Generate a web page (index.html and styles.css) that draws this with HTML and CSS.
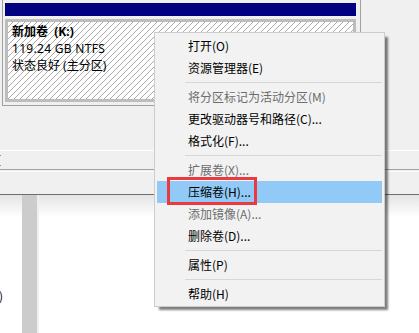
FILE: index.html
```html
<!DOCTYPE html>
<html lang="zh-CN">

<head>
    <meta charset="UTF-8">
    <meta name="viewport" content="width=device-width, initial-scale=1.0">
    <title>磁盘管理</title>
    <link rel="stylesheet" href="styles.css">
</head>

<body>
    <div class="disk-area">
        <div class="volume-frame">
            <div class="volume">
                <div class="volume-head"></div>
                <div class="volume-body">
                    <div class="vol-name">新加卷&nbsp; (K:)</div>
                    <div class="vol-size">119.24 GB NTFS</div>
                    <div>状态良好 (主分区)</div>
                </div>
            </div>
        </div>
    </div>
    <div class="legend-bar">
        <div class="legend-swatch"></div>
        <div class="legend-line"></div>
    </div>
    <div class="list-area">
        <div class="list-row">
            <div class="cut"><span>主分区)</span></div>
            <div class="col-split"></div>
        </div>
    </div>

    <!-- context menu -->
    <div class="menu">
        <div class="menu-item">打开(O)</div>
        <div class="menu-item">资源管理器(E)</div>
        <div class="menu-sep"></div>
        <div class="menu-item disabled">将分区标记为活动分区(M)</div>
        <div class="menu-item">更改驱动器号和路径(C)...</div>
        <div class="menu-item">格式化(F)...</div>
        <div class="menu-sep"></div>
        <div class="menu-item disabled">扩展卷(X)...</div>
        <div class="menu-item active">压缩卷(H)...<span class="mark"></span></div>
        <div class="menu-item disabled">添加镜像(A)...</div>
        <div class="menu-item">删除卷(D)...</div>
        <div class="menu-sep"></div>
        <div class="menu-item">属性(P)</div>
        <div class="menu-sep"></div>
        <div class="menu-item">帮助(H)</div>
    </div>
</body>

</html>
```

FILE: styles.css
```css
* {
    margin: 0;
    padding: 0;
    box-sizing: border-box;
}

body {
    width: 419px;
    height: 333px;
    overflow: hidden;
    position: relative;
    background: #fff;
    font-family: "Noto Sans CJK SC", "Noto Sans", sans-serif;
    font-size: 12px;
    color: #000;
}

.disk-area {
    height: 150px;
    background: #f0f0f0;
    padding-left: 2px;
}

.volume-frame {
    width: 359px;
    height: 106px;
    border-left: 1px solid #a0a0a0;
    border-right: 1px solid #a0a0a0;
    border-bottom: 1px solid #a0a0a0;
    padding: 3px 4px 0 2px;
}

.volume-head {
    height: 13px;
    background: #000080;
}

.volume-body {
    margin-top: 3px;
    height: 83px;
    border: 3px solid #bdbdbd;
    background: repeating-linear-gradient(135deg, #fff 0 3.2px, #a9a9a9 3.2px 4.24px);
    padding: 1px 4px;
    line-height: 17px;
    font-family: "Noto Sans", "Noto Sans CJK SC", sans-serif;
}

.vol-name {
    font-weight: bold;
}

.vol-size {
    letter-spacing: 0.3px;
}

.legend-bar {
    height: 45px;
    background: #f0f0f0;
    border-top: 1px solid #fff;
    border-bottom: 1px solid #6e6e6e;
    padding-top: 4px;
}

.legend-swatch {
    width: 1px;
    height: 11px;
    border-top: 1px solid #4aa3f5;
    border-bottom: 1px solid #4aa3f5;
}

.legend-line {
    margin-top: 3px;
    height: 3px;
    border-top: 1px solid #a0a0a0;
    border-bottom: 1px solid #fafafa;
}

.list-area {
    height: 139px;
    background: linear-gradient(#e4e4e4, #fff 22px);
}

.list-row {
    display: flex;
    height: 100%;
}

.cut {
    width: 22px;
    overflow: hidden;
    white-space: nowrap;
    display: flex;
    justify-content: flex-end;
    padding-right: 19px;
    padding-top: 92px;
    line-height: 17px;
}

.col-split {
    width: 17px;
    background: #cccccc;
    border-right: 2px solid #efefef;
}

.menu {
    position: absolute;
    left: 154px;
    top: 32px;
    width: 231px;
    background: #f2f2f2;
    border: 1px solid #cccccc;
    padding: 2px 2px 1px;
    box-shadow: 4px 4px 2px -1px rgba(0, 0, 0, 0.5);
}

.menu-item {
    position: relative;
    height: 22px;
    line-height: 22px;
    padding-left: 31px;
    white-space: nowrap;
}

.menu-item.disabled {
    color: #6d6d6d;
}

.menu-item.active {
    background: #91c9f7;
}

.menu-sep {
    height: 7px;
    margin-left: 28px;
    padding-top: 3px;
}

.menu-sep::after {
    content: "";
    display: block;
    height: 1px;
    background: #d7d7d7;
}

.mark {
    position: absolute;
    left: 10px;
    top: -4px;
    width: 90px;
    height: 28px;
    border: 3px solid #ea3a3f;
}
```
